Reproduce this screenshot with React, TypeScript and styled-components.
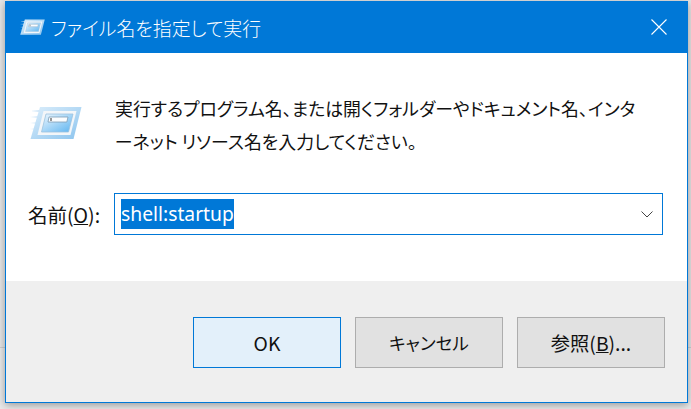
import React from "react";
import styled, { createGlobalStyle } from "styled-components";

const Global = createGlobalStyle`
  html, body { margin: 0; padding: 0; }
  body {
    width: 691px; height: 409px; overflow: hidden;
    background: linear-gradient(#e6e6e6 0 347px, #cfcfcf 347px 348px, #e9e9e9 348px);
    font-family: "Noto Sans CJK JP", "Noto Sans", sans-serif;
    font-feature-settings: "palt";
    color: #111;
  }
`;
const Stage = styled.div`
  padding: 1px 3px 6px 5px;
  height: 409px;
  box-sizing: border-box;
`;
const Window = styled.div`
  width: 683px;
  height: 402px;
  box-sizing: border-box;
  display: flex;
  flex-direction: column;
  border: 1px solid #0078d7;
  border-top: 0;
  box-shadow: 0 2px 8px rgba(0, 0, 0, 0.35);
`;
const TitleBar = styled.div`
  height: 52px;
  flex: none;
  margin: 0 -1px;
  background: #0078d7;
  color: #fff;
  display: flex;
  align-items: center;
  padding: 0 21px 0 15px;
  gap: 7px;
  font-size: 18.9px;
`;
const TitleText = styled.div`
  flex: 1;
  font-weight: 300;
  margin-left: -1px;
`;
const Content = styled.div`
  flex: 1;
  background: #fff;
  display: flex;
  flex-direction: column;
  padding: 39px 24px 0 22px;
`;
const Intro = styled.div`
  display: flex;
  gap: 33px;
`;
const IconSlot = styled.div`
  margin: 14px 0 0 2px;
  flex: none;
  height: 34px;
`;
const Message = styled.div`
  font-size: 17.9px;
  line-height: 33px;
  white-space: nowrap;
`;
const NameRow = styled.div`
  display: flex;
  align-items: center;
  margin-top: 35px;
`;
const NameLabel = styled.div`
  width: 86px;
  flex: none;
  font-size: 19.5px;
  white-space: nowrap;
`;
const U = styled.span`
  text-decoration: underline;
`;
const Combo = styled.div`
  flex: 1;
  height: 42px;
  box-sizing: border-box;
  border: 1px solid #0078d7;
  display: flex;
  align-items: center;
  padding: 0 9px 0 6px;
  justify-content: space-between;
`;
const Selected = styled.span`
  background: #0078d7;
  color: #fff;
  font-family: "Noto Sans", sans-serif;
  font-size: 19.3px;
  line-height: 30px;
  height: 30px;
  font-feature-settings: normal;
`;
const Footer = styled.div`
  height: 121px;
  flex: none;
  background: #efefef;
  box-sizing: border-box;
  padding: 36px 22px 0 0;
  display: flex;
  justify-content: flex-end;
  gap: 14px;
`;
const Button = styled.div<{ $primary?: boolean; $kana?: boolean }>`
  width: 148px;
  height: 51px;
  box-sizing: border-box;
  display: flex;
  align-items: center;
  justify-content: center;
  font-size: ${(p) => (p.$kana ? "17.6px" : "19.3px")};
  background: ${(p) => (p.$primary ? "#e3f0fa" : "#e1e1e1")};
  border: 1px solid ${(p) => (p.$primary ? "#0078d7" : "#adadad")};
`;

const RunIcon = ({ width, id }: { width: number; id: string }) => (
  <svg width={width} height={(width * 34) / 52} viewBox="0 0 52 34" style={{ flex: "none", display: "block" }}>
    <defs>
      <linearGradient id={`${id}f`} x1="0" y1="0" x2="1" y2="1">
        <stop offset="0" stopColor="#dceefb" />
        <stop offset="1" stopColor="#8cc4ee" />
      </linearGradient>
      <linearGradient id={`${id}p`} x1="0" y1="0" x2="1" y2="1">
        <stop offset="0" stopColor="#eef7fe" />
        <stop offset="1" stopColor="#5db4f0" />
      </linearGradient>
      <linearGradient id={`${id}t`} x1="0" y1="0" x2="1" y2="0">
        <stop offset="0" stopColor="#cfe6f8" stopOpacity="0" />
        <stop offset="1" stopColor="#bcdcf5" />
      </linearGradient>
    </defs>
    <path d="M2 4h10v2H2zM0 10h9v2H0zM0 16h8v2H0zM0 22h6v2H0z" fill={`url(#${id}t)`} />
    <path d="M10 1h41.500l-8 32H.5z" fill={`url(#${id}f)`} />
    <path d="M13.500 5h33l-6 24H7.500z" fill="#f3f6f9" />
    <path d="M16 8h27l-4.500 18H11.500z" fill={`url(#${id}p)`} stroke="#9cc3df" strokeWidth="0.8" />
    <path d="M19 11h19l-1.200 5H18z" fill="#fbfdff" stroke="#7d9db5" strokeWidth="0.8" />
    <path d="M21 12v3" stroke="#333" strokeWidth="1" />
  </svg>
);

export default function App() {
  return (
    <>
      <Global />
      <Stage>
        <Window>
          <TitleBar>
            <RunIcon width={25} id="a" />
            <TitleText>ファイル名を指定して実行</TitleText>
            <svg width="16" height="16" viewBox="0 0 16 16">
              <path d="M.5.5l15 15M15.500.5l-15 15" stroke="#fff" strokeWidth="1.1" fill="none" />
            </svg>
          </TitleBar>
          <Content>
            <Intro>
              <IconSlot>
                <RunIcon width={52} id="b" />
              </IconSlot>
              <Message>
                実行するプログラム名、または開くフォルダーやドキュメント名、インタ
                <br />
                ーネット リソース名を入力してください。
              </Message>
            </Intro>
            <NameRow>
              <NameLabel>
                名前(<U>O</U>):
              </NameLabel>
              <Combo>
                <Selected>shell:startup</Selected>
                <svg width="12" height="7" viewBox="0 0 12 7">
                  <path d="M.5.5L6 6l5.500-5.500" stroke="#444" strokeWidth="1" fill="none" />
                </svg>
              </Combo>
            </NameRow>
          </Content>
          <Footer>
            <Button $primary>OK</Button>
            <Button $kana>キャンセル</Button>
            <Button>
              参照(<U>B</U>)...
            </Button>
          </Footer>
        </Window>
      </Stage>
    </>
  );
}
